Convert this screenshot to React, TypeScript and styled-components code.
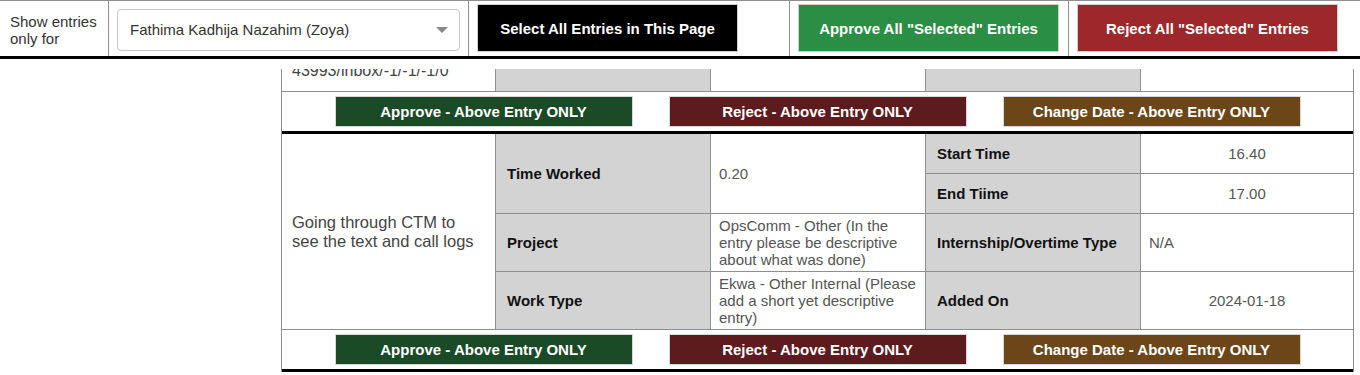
import React from "react";
import styled, { createGlobalStyle } from "styled-components";

const Global = createGlobalStyle`
  html, body { margin: 0; padding: 0; background: #fff; }
  body { font-family: "Liberation Sans", Arial, sans-serif; overflow: hidden; }
  * { box-sizing: border-box; }
`;

const Page = styled.div`
  width: 1360px;
  height: 375px;
  overflow: hidden;
  background: #fff;
`;

const Header = styled.div`
  padding-bottom: 10px;
  background: #fff;
`;

const PrevRow = styled.div`
  display: flex;
  height: 1px;
  border-bottom: 1px solid #8f8f8f;
`;

const PrevCell = styled.div<{ $w: number }>`
  width: ${(p) => p.$w}px;
  border-right: 1px solid #8f8f8f;
`;

const Bar = styled.div`
  display: flex;
  height: 58px;
  border-bottom: 3px solid #000;
`;

const BarCell = styled.div<{ $w: number; $last?: boolean }>`
  width: ${(p) => p.$w}px;
  border-right: ${(p) => (p.$last ? "none" : "1px solid #8f8f8f")};
  display: flex;
  align-items: center;
  padding: 0 8px;
  flex-shrink: 0;
`;

const FilterLabel = styled.div`
  font-size: 15px;
  line-height: 17px;
  color: #333;
  padding-left: 2px;
  margin-top: 2px;
`;

const Select = styled.div`
  width: 343px;
  height: 42px;
  border: 1px solid #c8c8c8;
  border-radius: 4px;
  display: flex;
  align-items: center;
  justify-content: space-between;
  padding: 0 11px 0 12px;
  font-size: 15px;
  color: #333;
  margin-top: 2px;
`;

const Caret = styled.span`
  width: 0;
  height: 0;
  border-left: 6px solid transparent;
  border-right: 6px solid transparent;
  border-top: 6px solid #888;
`;

const BarButton = styled.button<{ $bg: string }>`
  width: 261px;
  height: 48px;
  background: ${(p) => p.$bg};
  border: 1px solid #cfcfcf;
  color: #fff;
  font-family: "Liberation Sans", Arial, sans-serif;
  font-weight: bold;
  font-size: 15px;
  padding: 0;
  margin-bottom: 1px;
`;

const Content = styled.div`
  margin-left: 281px;
  width: 1073px;
  border-left: 1px solid #8f8f8f;
  border-right: 1px solid #8f8f8f;
`;

const Entry = styled.div`
  border-bottom: 3px solid #000;
`;

const Grid = styled.div<{ $rows: string }>`
  display: grid;
  grid-template-columns: 213px 214px 214px 214px 212px;
  grid-template-rows: ${(p) => p.$rows};
  gap: 1px;
  background: #8f8f8f;
  border-bottom: 1px solid #8f8f8f;
`;

const Cell = styled.div<{ $span?: string; $col?: number }>`
  background: #fff;
  display: flex;
  align-items: center;
  overflow: hidden;
  ${(p) => (p.$span ? `grid-row: ${p.$span};` : "")}
  ${(p) => (p.$col ? `grid-column: ${p.$col};` : "")}
`;

const Desc = styled(Cell)`
  padding: 0 14px 0 10px;
  font-size: 16.5px;
  line-height: 19px;
  color: #444;
`;

const ClippedDesc = styled(Cell)`
  align-items: flex-start;
  padding: 0 10px;
  font-size: 16px;
  line-height: 19px;
  color: #444;
`;

const ClippedText = styled.div`
  margin-top: -8px;
`;

const Label = styled(Cell)`
  background: #d3d3d3;
  padding: 0 11px;
  font-size: 15px;
  font-weight: bold;
  color: #111;
`;

const Value = styled(Cell)<{ $center?: boolean }>`
  padding: 0 8px 0 8px;
  font-size: 15px;
  line-height: 17px;
  color: #555;
  justify-content: ${(p) => (p.$center ? "center" : "flex-start")};
`;

const Actions = styled.div`
  height: 39px;
  display: flex;
  align-items: center;
  justify-content: center;
  gap: 36px;
  background: #fff;
`;

const ActionButton = styled.button<{ $bg: string }>`
  width: 298px;
  height: 31px;
  background: ${(p) => p.$bg};
  border: 1px solid #d8d8d8;
  color: #fff;
  font-family: "Liberation Sans", Arial, sans-serif;
  font-weight: bold;
  font-size: 15px;
  padding: 0;
`;

const ActionRow = () => (
  <Actions>
    <ActionButton $bg="#1b4a27">Approve - Above Entry ONLY</ActionButton>
    <ActionButton $bg="#5e1b1e">Reject - Above Entry ONLY</ActionButton>
    <ActionButton $bg="#6b4619">Change Date - Above Entry ONLY</ActionButton>
  </Actions>
);

export default function App() {
  return (
    <Page>
      <Global />
      <Header>
        <PrevRow>
          {[108, 253, 102, 284, 139, 342].map((w, i) => (
            <PrevCell key={i} $w={w} />
          ))}
        </PrevRow>
        <Bar>
          <BarCell $w={109}>
            <FilterLabel>
              Show entries
              <br />
              only for
            </FilterLabel>
          </BarCell>
          <BarCell $w={360}>
            <Select>
              <span>Fathima Kadhija Nazahim (Zoya)</span>
              <Caret />
            </Select>
          </BarCell>
          <BarCell $w={321}>
            <BarButton $bg="#000">Select All Entries in This Page</BarButton>
          </BarCell>
          <BarCell $w={279}>
            <BarButton $bg="#2b8e45">Approve All "Selected" Entries</BarButton>
          </BarCell>
          <BarCell $w={291} $last>
            <BarButton $bg="#9c282c">Reject All "Selected" Entries</BarButton>
          </BarCell>
        </Bar>
      </Header>
      <Content>
        <Entry>
          <Grid $rows="22px">
            <ClippedDesc>
              <ClippedText>43993/inbox/-1/-1/-1/0</ClippedText>
            </ClippedDesc>
            <Label />
            <Value />
            <Label />
            <Value />
          </Grid>
          <ActionRow />
        </Entry>
        <Entry>
          <Grid $rows="39px 39px 57px 57px">
            <Desc $span="1 / 5" $col={1}>
              Going through CTM to see the text and call logs
            </Desc>
            <Label $span="1 / 3" $col={2}>Time Worked</Label>
            <Value $span="1 / 3" $col={3}>0.20</Value>
            <Label $col={4}>Start Time</Label>
            <Value $col={5} $center>16.40</Value>
            <Label $col={4}>End Tiime</Label>
            <Value $col={5} $center>17.00</Value>
            <Label $col={2}>Project</Label>
            <Value $col={3}>
              OpsComm - Other (In the entry please be descriptive about what was done)
            </Value>
            <Label $col={4}>Internship/Overtime Type</Label>
            <Value $col={5}>N/A</Value>
            <Label $col={2}>Work Type</Label>
            <Value $col={3}>
              Ekwa - Other Internal (Please add a short yet descriptive entry)
            </Value>
            <Label $col={4}>Added On</Label>
            <Value $col={5} $center>2024-01-18</Value>
          </Grid>
          <ActionRow />
        </Entry>
      </Content>
    </Page>
  );
}
